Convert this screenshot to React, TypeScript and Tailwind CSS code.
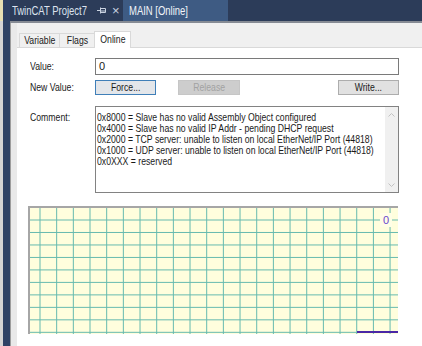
import React from "react";

const FONT = "font-['Liberation_Sans',Arial,sans-serif]";

const COMMENT_LINES = [
  "0x8000 = Slave has no valid Assembly Object configured",
  "0x4000 = Slave has no valid IP Addr - pending DHCP request",
  "0x2000 = TCP server: unable to listen on local EtherNet/IP Port (44818)",
  "0x1000 = UDP server: unable to listen on local EtherNet/IP Port (44818)",
  "0x0XXX = reserved",
];

// the screenshot's UI font is narrow, squeeze Liberation Sans to match
function T({ children, center }: { children: React.ReactNode; center?: boolean }) {
  return (
    <span
      className={`inline-block whitespace-nowrap scale-x-[0.79] ${center ? "origin-center" : "origin-left"}`}
    >
      {children}
    </span>
  );
}

function PinIcon() {
  return (
    <svg width="9" height="7" viewBox="0 0 9 7" className="text-[#c9d2e0]">
      <path d="M0 3.5h3M3.5 0.5v6M3.5 1.5h5v4h-5M3.5 4h5" fill="none" stroke="currentColor" strokeWidth="1" />
    </svg>
  );
}

function Chevron({ up }: { up?: boolean }) {
  return (
    <svg width="7" height="4" viewBox="0 0 7 4">
      <path
        d={up ? "M0.5 3.5L3.5 0.5L6.5 3.5" : "M0.5 0.5L3.5 3.5L6.5 0.5"}
        fill="none"
        stroke="#c2c2c2"
        strokeWidth="1"
      />
    </svg>
  );
}

function Chart() {
  const cols = Array.from({ length: 22 }, (_, k) => 10 + k * 16.67);
  const rows = Array.from({ length: 10 }, (_, k) => 12 + k * 12.48);
  return (
    <div className="relative ml-[11px] mt-[13px] h-[128px] w-[370px] shrink-0 border-l-2 border-t-2 border-[#a6a6a6] bg-[#fffedd]">
      <svg width="368" height="126" className="block">
        {cols.map((x) => (
          <line key={`c${x}`} x1={x} y1={0} x2={x} y2={126} stroke="#66baaf" strokeWidth="1" />
        ))}
        {rows.map((y) => (
          <line key={`r${y}`} x1={0} y1={y} x2={368} y2={y} stroke="#66baaf" strokeWidth="1" />
        ))}
        <rect x="327" y="123" width="41" height="2" fill="#4a27a6" />
      </svg>
      <div className="absolute left-[350px] top-[5px] flex h-[14px] w-[12px] items-center justify-center bg-[#fffee6] text-[11px] leading-none text-[#6a45cf]">
        0
      </div>
    </div>
  );
}

export default function App() {
  return (
    <div className={`flex h-[346px] w-[422px] overflow-hidden bg-white ${FONT}`}>
      <div className="flex w-[3px] shrink-0 flex-col">
        <div className="h-[21px] bg-[#e8e1b4]" />
        <div className="flex-1 bg-[#d4d4d4]" />
      </div>
      <div className="w-[7px] shrink-0 bg-[#2e4265]" />
      <div className="flex min-w-0 flex-1 flex-col">
        <div className="flex h-[21px] shrink-0 bg-[#2c3c59] text-[12px] leading-none">
          <div className="flex w-[113px] shrink-0 items-center pl-[2px] text-[#dce3ee]">
            <span className="w-[85px]">
              <T>TwinCAT Project7</T>
            </span>
            <PinIcon />
            <span className="ml-[6px] text-[13px] text-[#c9d2e0]">×</span>
          </div>
          <div className="flex w-[105px] shrink-0 items-center bg-[#3e5b83] pl-[6px] text-[#f2f5fa]">
            <T>MAIN [Online]</T>
          </div>
        </div>
        <div className="h-[2px] shrink-0 bg-[#868b94]" />
        <div className="flex min-h-0 flex-1">
          <div className="w-[7px] shrink-0 border-l border-[#9c9c9c] bg-[#e9e9e9]" />
          <div className="flex min-w-0 flex-1 flex-col">
            <div className="flex h-[25px] shrink-0 items-end border-b border-[#d9d9d9] bg-[#f0f0f0] pl-[2px] text-[11px] leading-none text-[#1a1a1a]">
              <div className="flex h-[14px] w-[40px] items-center justify-center border-l border-t border-[#d9d9d9]">
                <T center>Variable</T>
              </div>
              <div className="flex h-[14px] w-[35px] items-center justify-center border-l border-t border-[#d9d9d9]">
                <T center>Flags</T>
              </div>
              <div className="-mb-px flex h-[17px] w-[37px] items-center justify-center border-x border-t border-[#d9d9d9] bg-white pb-[2px]">
                <T center>Online</T>
              </div>
            </div>
            <div className="flex flex-1 flex-col bg-white text-[11px] leading-none text-[#1a1a1a]">
              <div className="mt-[10px] grid grid-cols-[65px_minmax(0,1fr)] gap-y-[5px] pl-[13px] pr-[23px]">
                <div className="flex h-[17px] items-center">
                  <T>Value:</T>
                </div>
                <div className="flex h-[17px] items-center border border-[#7a7a7a] pl-[3px]">0</div>

                <div className="flex h-[15px] items-center">
                  <T>New Value:</T>
                </div>
                <div className="flex h-[15px]">
                  <div className="flex w-[61px] items-center justify-center border border-[#3f7fb8] bg-[#e3e6ea]">
                    <T center>Force...</T>
                  </div>
                  <div className="ml-[22px] flex w-[62px] items-center justify-center border border-[#c6c6c6] bg-[#cdcdcd] text-[#a2a2a2]">
                    <T center>Release</T>
                  </div>
                  <div className="ml-auto flex w-[61px] items-center justify-center border border-[#adadad] bg-[#e1e1e1]">
                    <T center>Write...</T>
                  </div>
                </div>

                <div className="mt-[6px] pt-[6px]">
                  <T>Comment:</T>
                </div>
                <div className="mt-[6px] flex h-[87px] border border-[#828282]">
                  <div className="min-w-0 flex-1 pl-[1px] pt-[5px] leading-[11px]">
                    {COMMENT_LINES.map((l) => (
                      <div key={l}>
                        <T>{l}</T>
                      </div>
                    ))}
                  </div>
                  <div className="flex w-[13px] shrink-0 flex-col items-center justify-between bg-[#f0f0f0] pb-[5px] pt-[6px]">
                    <Chevron up />
                    <Chevron />
                  </div>
                </div>
              </div>
              <Chart />
            </div>
          </div>
        </div>
      </div>
    </div>
  );
}
